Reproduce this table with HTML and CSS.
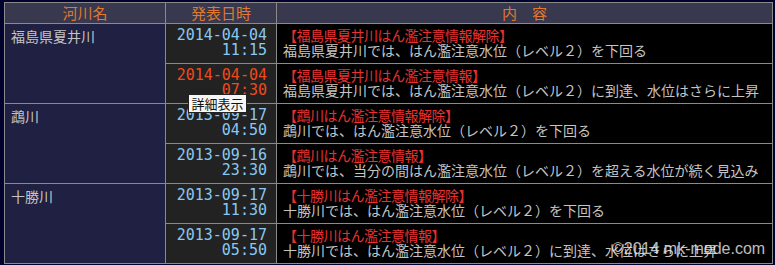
FILE: index.html
```html
<!DOCTYPE html>
<html lang="ja">
<head>
<meta charset="utf-8">
<link rel="stylesheet" href="styles.css">
</head>
<body>
<table class="alerts">
  <colgroup>
    <col class="c-river">
    <col class="c-date">
    <col class="c-body">
  </colgroup>
  <thead>
    <tr class="head">
      <th>河川名</th>
      <th>発表日時</th>
      <th>内　容</th>
    </tr>
  </thead>
  <tbody>
    <tr>
      <td class="river" rowspan="2">福島県夏井川</td>
      <td class="date">2014-04-04<br>11:15</td>
      <td class="body"><span class="title">【福島県夏井川はん濫注意情報解除】</span><br>福島県夏井川では、はん濫注意水位（レベル２）を下回る</td>
    </tr>
    <tr>
      <td class="date hot">2014-04-04<br>07:30</td>
      <td class="body"><span class="title">【福島県夏井川はん濫注意情報】</span><br>福島県夏井川では、はん濫注意水位（レベル２）に到達、水位はさらに上昇</td>
    </tr>
    <tr>
      <td class="river" rowspan="2">鵡川</td>
      <td class="date">2013-09-17<br>04:50</td>
      <td class="body"><span class="title">【鵡川はん濫注意情報解除】</span><br>鵡川では、はん濫注意水位（レベル２）を下回る</td>
    </tr>
    <tr>
      <td class="date">2013-09-16<br>23:30</td>
      <td class="body"><span class="title">【鵡川はん濫注意情報】</span><br>鵡川では、当分の間はん濫注意水位（レベル２）を超える水位が続く見込み</td>
    </tr>
    <tr>
      <td class="river" rowspan="2">十勝川</td>
      <td class="date">2013-09-17<br>11:30</td>
      <td class="body"><span class="title">【十勝川はん濫注意情報解除】</span><br>十勝川では、はん濫注意水位（レベル２）を下回る</td>
    </tr>
    <tr>
      <td class="date">2013-09-17<br>05:50</td>
      <td class="body"><span class="title">【十勝川はん濫注意情報】</span><br>十勝川では、はん濫注意水位（レベル２）に到達、水位はさらに上昇</td>
    </tr>
  </tbody>
</table>
<div class="tooltip">詳細表示</div>
<div class="watermark">©2014 mk-mode.com</div>
</body>
</html>
```

FILE: styles.css
```css
html, body {
  margin: 0;
  padding: 0;
  background: #02022e;
  overflow: hidden;
}
body {
  padding: 2px 3px 0 4px;
  font-family: "Noto Sans CJK JP", "DejaVu Sans", sans-serif;
  position: relative;
  height: 265px;
  box-sizing: border-box;
}
.alerts {
  border-collapse: collapse;
  table-layout: fixed;
  width: 768px;
}
.c-river { width: 161px; }
.c-date { width: 111px; }
.c-body { width: 496px; }
.alerts th, .alerts td {
  border: 1px solid #8a8a8a;
}
.head th {
  height: 20px;
  padding: 0;
  background: #38384e;
  color: #e0782e;
  font-weight: normal;
  font-size: 15px;
  line-height: 20px;
  text-align: center;
}
.alerts td {
  height: 39px;
  padding: 4px 6px 5px;
  box-sizing: border-box;
  vertical-align: top;
  font-size: 14px;
  line-height: 15px;
  color: #c4c4c4;
  white-space: nowrap;
}
.river {
  background: #202042;
  padding-top: 5px !important;
}
.date {
  background: #222222;
  text-align: right;
  font-family: "DejaVu Sans Mono", monospace;
  font-size: 15px !important;
  color: #88c8f4 !important;
  padding-right: 9px !important;
}
.date.hot {
  color: #f04a1c !important;
}
.body {
  background: #000000;
}
.title {
  color: #e83030;
  letter-spacing: -0.5px;
}
.tooltip {
  position: absolute;
  left: 188px;
  top: 94px;
  width: 59px;
  height: 19px;
  box-sizing: border-box;
  background: #f6f6f6;
  border: 1px solid #222;
  color: #111;
  font-size: 13px;
  line-height: 17px;
  text-align: center;
}
.watermark {
  position: absolute;
  left: 612px;
  top: 239px;
  white-space: nowrap;
  font-family: "Liberation Sans", Arial, sans-serif;
  font-size: 16px;
  line-height: 20px;
  color: rgba(240, 240, 240, 0.8);
}
```
